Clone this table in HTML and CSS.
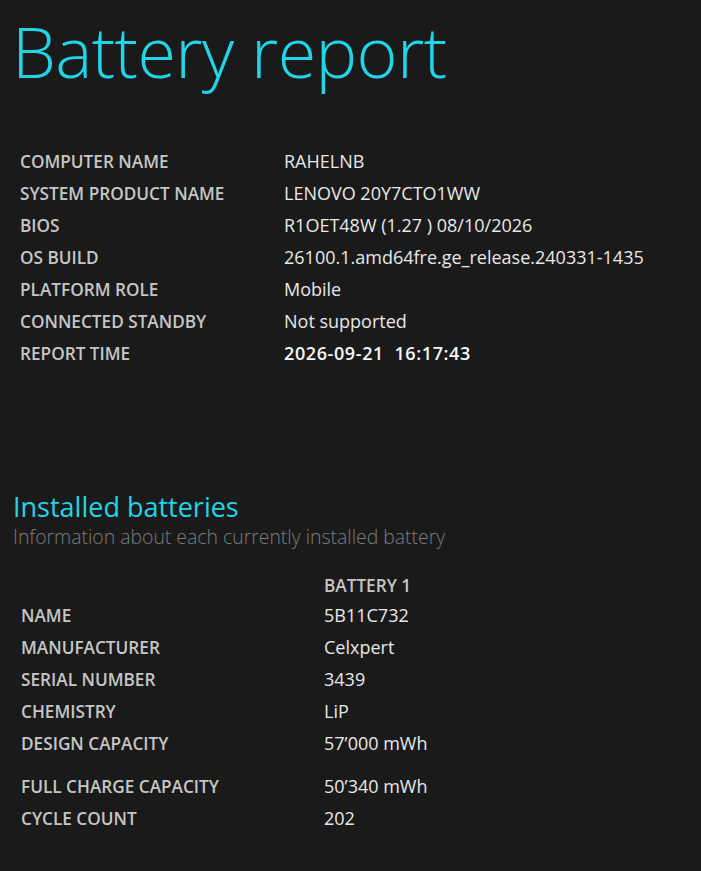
FILE: index.html
```html
<!DOCTYPE html>
<html lang="en">
<head>
  <meta charset="UTF-8" />
  <title>Battery report</title>
  <link rel="stylesheet" href="styles.css">
</head>
<body>
  <h1>Battery report</h1>

  <!-- System info -->
  <div class="info">
    <div class="row"><span class="label">COMPUTER NAME</span><span class="value">RAHELNB</span></div>
    <div class="row"><span class="label">SYSTEM PRODUCT NAME</span><span class="value">LENOVO 20Y7CTO1WW</span></div>
    <div class="row"><span class="label">BIOS</span><span class="value">R1OET48W (1.27 ) 08/10/2026</span></div>
    <div class="row"><span class="label">OS BUILD</span><span class="value">26100.1.amd64fre.ge_release.240331-1435</span></div>
    <div class="row"><span class="label">PLATFORM ROLE</span><span class="value">Mobile</span></div>
    <div class="row"><span class="label">CONNECTED STANDBY</span><span class="value">Not supported</span></div>
    <div class="row"><span class="label">REPORT TIME</span><span class="value time">2026-09-21&nbsp;&nbsp;16:17:43</span></div>
  </div>

  <h2>Installed batteries</h2>
  <div class="description">Information about each currently installed battery</div>

  <!-- Battery details -->
  <div class="batteries">
    <div class="row head"><span class="label"></span><span class="col-head">BATTERY 1</span></div>
    <div class="row"><span class="label">NAME</span><span class="value">5B11C732</span></div>
    <div class="row"><span class="label">MANUFACTURER</span><span class="value">Celxpert</span></div>
    <div class="row"><span class="label">SERIAL NUMBER</span><span class="value">3439</span></div>
    <div class="row"><span class="label">CHEMISTRY</span><span class="value">LiP</span></div>
    <div class="row spaced"><span class="label">DESIGN CAPACITY</span><span class="value">57’000 mWh</span></div>
    <div class="row"><span class="label">FULL CHARGE CAPACITY</span><span class="value">50’340 mWh</span></div>
    <div class="row"><span class="label">CYCLE COUNT</span><span class="value">202</span></div>
  </div>
</body>
</html>
```

FILE: styles.css
```css
* {
  box-sizing: border-box;
}

body {
  font-family: "Open Sans", "Noto Sans", sans-serif;
  margin: 0;
  padding: 0 12px;
  background-color: #1a1a1a;
  color: #e6e6e6;
}

h1 {
  margin: 0;
  padding-top: 6px;
  font-size: 70px;
  font-weight: 300;
  line-height: 90px;
  color: #22d4e8;
  letter-spacing: -0.6px;
}

.row {
  display: flex;
  align-items: baseline;
  line-height: 32px;
  height: 32px;
}

.label {
  flex: none;
  font-size: 17.2px;
  font-weight: 600;
  color: #c6c6c6;
}

.value {
  font-size: 18px;
  color: #e8e8e8;
}

.info {
  margin-top: 49px;
  padding-left: 8px;
}

.info .label {
  width: 264px;
}

.info .time {
  font-weight: 600;
  color: #f6f6f6;
  letter-spacing: 0.6px;
}

h2 {
  margin: 121px 0 0 1px;
  font-size: 27px;
  font-weight: 400;
  line-height: 34px;
  color: #22d4e8;
}

.description {
  margin-left: 1px;
  font-size: 19.4px;
  font-weight: 300;
  color: #7c7c7c;
  line-height: 26px;
}

.batteries {
  margin-top: 22px;
  padding-left: 9px;
}

.batteries .label {
  width: 303px;
}

.batteries .head {
  height: 27px;
  line-height: 27px;
}

.col-head {
  font-size: 17.2px;
  font-weight: 600;
  color: #c6c6c6;
}

.batteries .spaced {
  margin-bottom: 11px;
}
```
